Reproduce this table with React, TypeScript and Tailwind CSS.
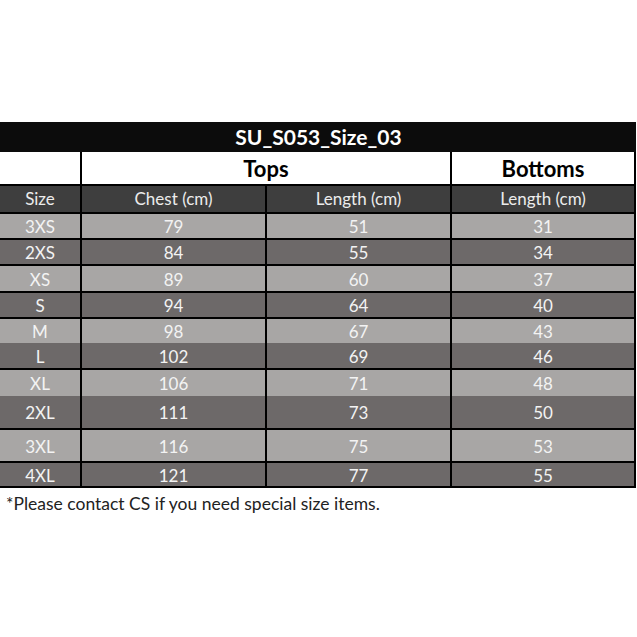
import React from 'react';

type Row = {
  size: string;
  chest: number;
  length: number;
  bottom: number;
  light: boolean;
  h: string;
  line: boolean;
};

const rows: Row[] = [
  { size: "3XS", chest: 79, length: 51, bottom: 31, light: true, h: "h-[26px]", line: true },
  { size: "2XS", chest: 84, length: 55, bottom: 34, light: false, h: "h-[26px]", line: true },
  { size: "XS", chest: 89, length: 60, bottom: 37, light: true, h: "h-[27px]", line: true },
  { size: "S", chest: 94, length: 64, bottom: 40, light: false, h: "h-[26px]", line: true },
  { size: "M", chest: 98, length: 67, bottom: 43, light: true, h: "h-[24px]", line: false },
  { size: "L", chest: 102, length: 69, bottom: 46, light: false, h: "h-[27px]", line: true },
  { size: "XL", chest: 106, length: 71, bottom: 48, light: true, h: "h-[26px]", line: false },
  { size: "2XL", chest: 111, length: 73, bottom: 50, light: false, h: "h-[34px]", line: true },
  { size: "3XL", chest: 116, length: 75, bottom: 53, light: true, h: "h-[33px]", line: true },
  { size: "4XL", chest: 121, length: 77, bottom: 55, light: false, h: "h-[25px]", line: true },
];

const font = { fontFamily: '"Lato", "Open Sans", sans-serif' };

function App() {
  return (
    <div className="w-[637px] h-[637px] bg-white pt-[122px]" style={font}>
      <div className="w-[636px]">
        <div className="h-[30px] bg-[#0c0c0c] flex items-center justify-center text-white font-bold text-[21px] pl-[1px]">
          SU_S053_Size_03
        </div>
        <div className="flex h-[34px] border-b-2 border-black bg-white text-black font-bold text-[22px]">
          <div className="w-[82px] border-r-2 border-black" />
          <div className="w-[370px] border-r-2 border-black flex items-center justify-center">Tops</div>
          <div className="w-[184px] border-r-2 border-black flex items-center justify-center">Bottoms</div>
        </div>
        <div className="flex h-[28px] border-b-2 border-black bg-[#3e3e3e] text-[#ececec] text-[17px]">
          <div className="w-[82px] border-r-2 border-black flex items-center justify-center">Size</div>
          <div className="w-[185px] border-r-2 border-black flex items-center justify-center">Chest (cm)</div>
          <div className="w-[185px] border-r-2 border-black flex items-center justify-center">Length (cm)</div>
          <div className="w-[184px] border-r-2 border-black flex items-center justify-center">Length (cm)</div>
        </div>
        {rows.map((r) => (
          <div
            key={r.size}
            className={`flex ${r.h} ${r.line ? "border-b-2 border-black" : ""} ${r.light ? "bg-[#a8a6a5]" : "bg-[#6d6969]"} text-[#f3f3f3] text-[17px]`}
          >
            <div className="w-[82px] border-r-2 border-black flex items-center justify-center pt-[2px]">{r.size}</div>
            <div className="w-[185px] border-r-2 border-black flex items-center justify-center pt-[2px]">{r.chest}</div>
            <div className="w-[185px] border-r-2 border-black flex items-center justify-center pt-[2px]">{r.length}</div>
            <div className="w-[184px] border-r-2 border-black flex items-center justify-center pt-[2px]">{r.bottom}</div>
          </div>
        ))}
        <div className="pl-[6px] pt-[3px] text-[17.5px] text-[#222]">
          *Please contact CS if you need special size items.
        </div>
      </div>
    </div>
  );
}

export default App;
